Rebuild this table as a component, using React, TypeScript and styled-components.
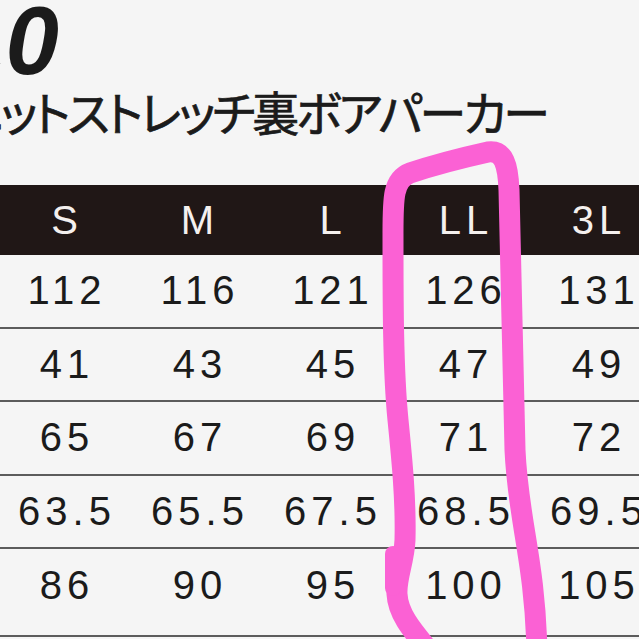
import styled, { createGlobalStyle } from 'styled-components'

const GlobalStyle = createGlobalStyle`
    html,
    body {
        margin: 0;
        padding: 0;
        background: #f5f5f5;
    }

    body {
        width: 639px;
        height: 639px;
        overflow: hidden;
    }
`

const Page = styled.div`
    position: relative;
    width: 639px;
    height: 639px;
    overflow: hidden;
    background: #f5f5f5;
    color: #1b1b1b;
    font-family: 'Liberation Sans', Arial, sans-serif;
`

const ModelNo = styled.div`
    height: 93px;
    margin: -7px 0 0 -48px;
    font-size: 96px;
    line-height: 96px;
    font-weight: 700;
    font-style: italic;
    white-space: nowrap;
`

const ProductName = styled.div`
    height: 47px;
    margin: 1px 0 0 -40px;
    font-family: 'Noto Sans CJK JP', sans-serif;
    font-size: 47px;
    line-height: 47px;
    font-weight: 400;
    letter-spacing: -3px;
    font-feature-settings: 'palt';
    -webkit-text-stroke: 0.7px #1b1b1b;
    white-space: nowrap;
`

const SizeTable = styled.div`
    width: 665px;
    margin: 51px 0 0 -2px;
`

const Row = styled.div<{ $head?: boolean; $tall?: boolean }>`
    display: grid;
    grid-template-columns: repeat(5, 133px);
    align-items: center;
    height: ${({ $head, $tall }) => ($head ? '70px' : $tall ? '88px' : '73.5px')};
    padding-bottom: ${({ $tall }) => ($tall ? '14px' : '0')};
    box-sizing: border-box;
    background: ${({ $head }) => ($head ? '#201716' : 'transparent')};
    border-bottom: ${({ $head }) => ($head ? 'none' : '2px solid #5c5c5c')};
`

const Cell = styled.span<{ $head?: boolean }>`
    text-align: center;
    font-size: 40px;
    letter-spacing: 5px;
    padding-left: 5px;
    color: ${({ $head }) => ($head ? '#f4f0ee' : '#1b1b1b')};
`

const Highlight = styled.svg`
    position: absolute;
    inset: 0;
    pointer-events: none;
`

const sizes = ['S', 'M', 'L', 'LL', '3L']

const rows = [
    ['112', '116', '121', '126', '131'],
    ['41', '43', '45', '47', '49'],
    ['65', '67', '69', '71', '72'],
    ['63.5', '65.5', '67.5', '68.5', '69.5'],
    ['86', '90', '95', '100', '105'],
]

const App = () => {
    return (
        <Page>
            <GlobalStyle />
            <ModelNo>10</ModelNo>
            <ProductName>ニットストレッチ裏ボアパーカー</ProductName>
            <SizeTable>
                <Row $head>
                    {sizes.map((s) => (
                        <Cell key={s} $head>
                            {s}
                        </Cell>
                    ))}
                </Row>
                {rows.map((r, i) => (
                    <Row key={i} $tall={i === rows.length - 1}>
                        {r.map((v, j) => (
                            <Cell key={j}>{v}</Cell>
                        ))}
                    </Row>
                ))}
            </SizeTable>
            <Highlight width="639" height="639" viewBox="0 0 639 639">
                <path
                    d="M 430 652 C 412 630, 398 614, 397 594 C 396 578, 404 562, 405 540 C 406 500, 402 460, 398 420 C 393 370, 393 300, 393 240 C 393 200, 392 180, 410 173 C 440 163, 470 156, 488 152 C 504 150, 508 165, 509 190 C 511 260, 513 380, 515 450 C 518 520, 535 560, 537 652"
                    fill="none"
                    stroke="#fb61d4"
                    strokeWidth="21"
                    strokeLinecap="round"
                    strokeLinejoin="round"
                />
                <path d="M 393 554 L 393 588" stroke="#fb61d4" strokeWidth="16" strokeLinecap="round" />
            </Highlight>
        </Page>
    )
}

export default App
